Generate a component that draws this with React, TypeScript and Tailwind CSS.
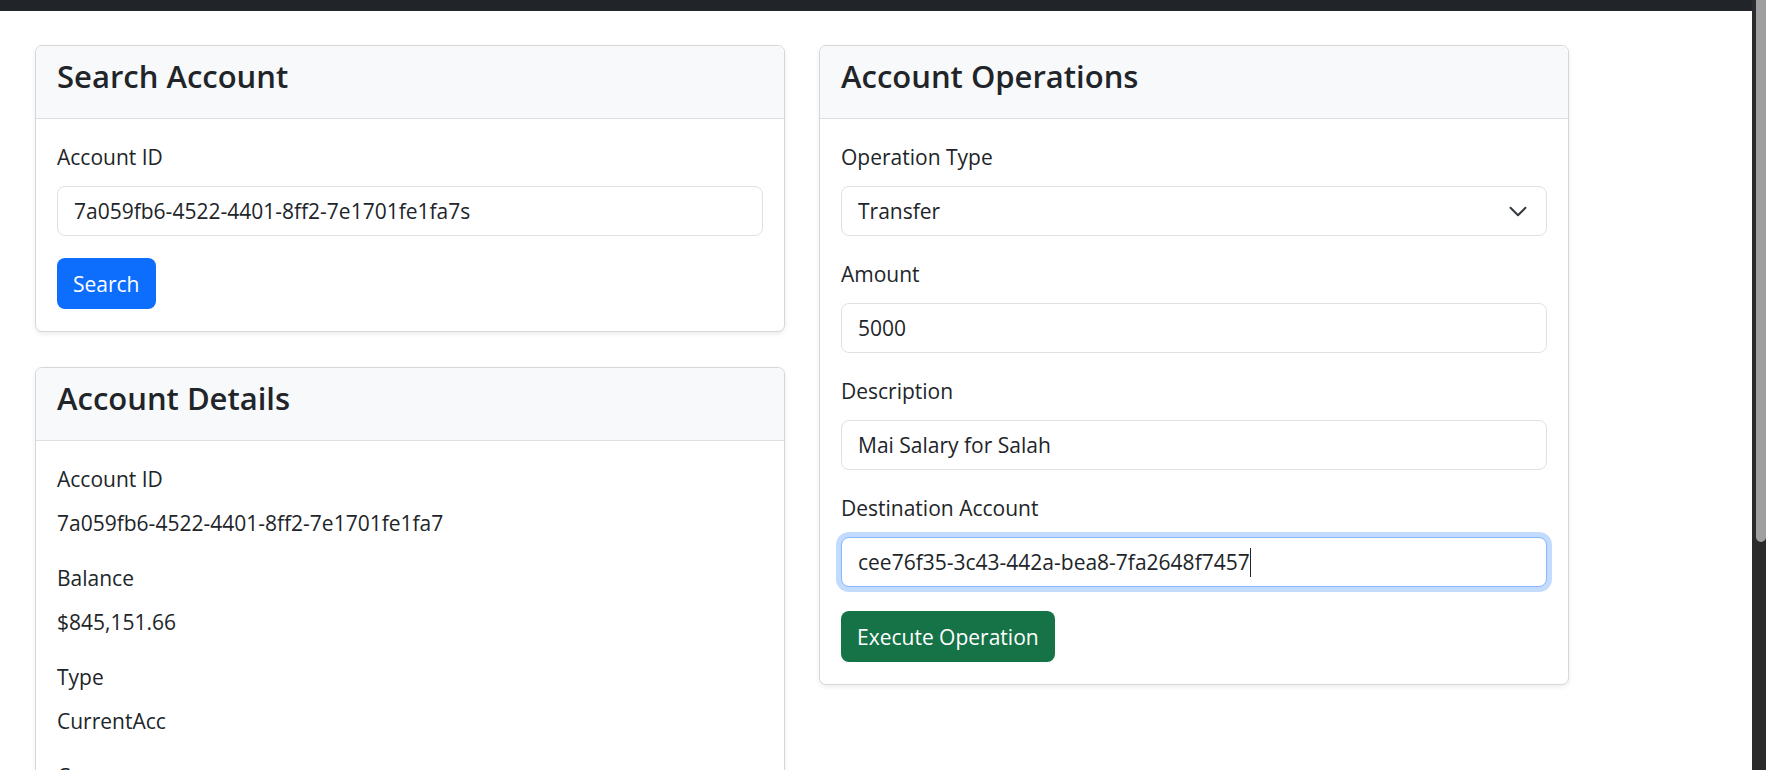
import React from "react";

const text = "text-[21px] leading-[32px] text-[#212529]";

function Card({ title, children }: { title: string; children: React.ReactNode }) {
    return (
        <div className="rounded-[7px] border border-[#d6d7d9] bg-white shadow-[0_2px_5px_rgba(0,0,0,0.08)]">
            <div className="h-[73px] rounded-t-[6px] border-b border-[#dcdfe3] bg-[#f8f9fa] px-[21px] pt-[11px]">
                <h3 className="text-[31px] font-semibold leading-[38px] text-[#212529]">{title}</h3>
            </div>
            <div className="px-[21px] pt-[22px] pb-[22px]">{children}</div>
        </div>
    );
}

function Field({ label, children, className }: { label: string; children: React.ReactNode; className?: string }) {
    return (
        <div className={className}>
            <label className={`mb-[13px] block ${text}`}>{label}</label>
            {children}
        </div>
    );
}

const Box = ({ value }: { value: string }) => (
    <div className={`flex h-[50px] items-center rounded-[8px] border border-[#dee2e6] bg-white px-[16px] ${text}`}>{value}</div>
);

const SelectBox = ({ value }: { value: string }) => (
    <div className={`flex h-[50px] items-center justify-between rounded-[8px] border border-[#dee2e6] bg-white pl-[16px] pr-[18px] ${text}`}>
        <span>{value}</span>
        <svg width="20" height="15" viewBox="0 0 16 12" fill="none">
            <path d="m2 3 6 6 6-6" stroke="#343a40" strokeWidth="1.6" strokeLinecap="round" strokeLinejoin="round" />
        </svg>
    </div>
);

const FocusBox = ({ value }: { value: string }) => (
    <div className={`flex h-[50px] items-center rounded-[8px] border border-[#86b7fe] bg-white px-[16px] shadow-[0_0_0_5px_rgba(13,110,253,0.25)] ${text}`}>
        {value}
        <span className="inline-block h-[29px] w-px bg-[#212529]" />
    </div>
);

const details = [
    ["Account ID", "7a059fb6-4522-4401-8ff2-7e1701fe1fa7"],
    ["Balance", "$845,151.66"],
    ["Type", "CurrentAcc"],
    ["Currency", "USD"],
    ["Status", "ACTIVATED"],
];

export default function App() {
    return (
        <div className="flex h-screen overflow-hidden bg-white font-['Open_Sans','Noto_Sans',sans-serif]">
            <div className="flex min-w-0 flex-1 flex-col">
                <div className="h-[11px] shrink-0 bg-[#212529]" />
                <div className="flex shrink-0 items-start gap-[34px] pl-[35px] pt-[34px]">
                    <div className="flex w-[750px] flex-col gap-[35px]">
                        <Card title="Search Account">
                            <Field label="Account ID" className="mb-[22px]">
                                <Box value="7a059fb6-4522-4401-8ff2-7e1701fe1fa7s" />
                            </Field>
                            <button className="h-[51px] rounded-[8px] bg-[#0d6efd] px-[16px] text-[21px] leading-[32px] text-white">Search</button>
                        </Card>

                        <Card title="Account Details">
                            {details.map(([k, v]) => (
                                <div key={k}>
                                    <div className={`mb-[12px] ${text}`}>{k}</div>
                                    <p className={`mb-[23px] ${text}`}>{v}</p>
                                </div>
                            ))}
                        </Card>
                    </div>

                    <div className="w-[750px]">
                        <Card title="Account Operations">
                            <Field label="Operation Type" className="mb-[22px]">
                                <SelectBox value="Transfer" />
                            </Field>
                            <Field label="Amount" className="mb-[22px]">
                                <Box value="5000" />
                            </Field>
                            <Field label="Description" className="mb-[22px]">
                                <Box value="Mai Salary for Salah" />
                            </Field>
                            <Field label="Destination Account" className="mb-[24px]">
                                <FocusBox value="cee76f35-3c43-442a-bea8-7fa2648f7457" />
                            </Field>
                            <button className="h-[51px] rounded-[8px] bg-[#157347] px-[16px] text-[21px] leading-[32px] text-white">Execute Operation</button>
                        </Card>
                    </div>
                </div>
            </div>
            {/* browser scrollbar */}
            <div className="w-[14px] shrink-0 bg-[#2b2b2b]">
                <div className="ml-[4px] h-[542px] w-[10px] rounded-b-[5px] bg-[#9f9f9f]" />
            </div>
        </div>
    );
}
